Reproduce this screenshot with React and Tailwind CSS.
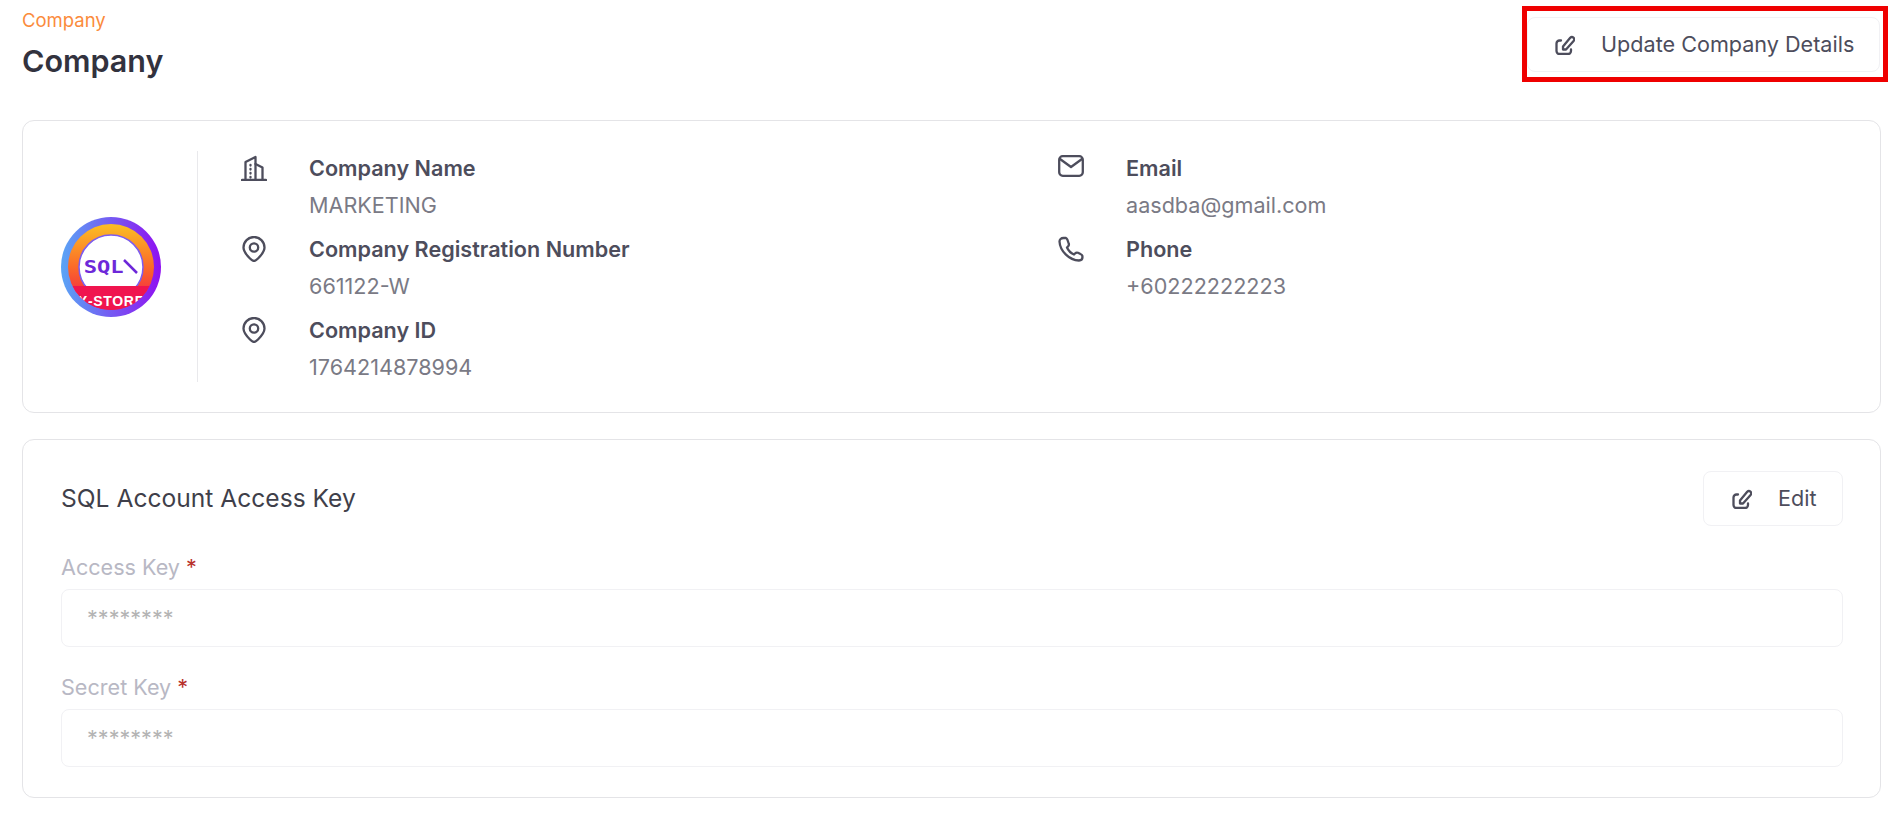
const FONT = "font-['Inter','Liberation_Sans',sans-serif]";

function EditIcon({ className }) {
  return (
    <svg viewBox="0 0 20 20" fill="none" stroke="currentColor" strokeWidth="2.300" strokeLinecap="round" strokeLinejoin="round" className={className}>
      <path d="M6 5.500H4.500a3 3 0 0 0-3 3V16a3 3 0 0 0 3 3H13a3 3 0 0 0 3-3v-1.500" />
      <path d="M8 14.500v-3L15.200 2.800a2.300 2.300 0 0 1 3.400 3.100L11 14.500z" />
    </svg>
  );
}
function Building() {
  return (
    <svg viewBox="0 0 26 26" fill="none" stroke="currentColor" strokeWidth="2.300" strokeLinecap="round" strokeLinejoin="round" className="w-[26px] h-[26px] text-[#4d4d5c]">
      <path d="M1 25h24" />
      <path d="M4.500 25V7l10-5v23" />
      <path d="M14.500 9l7 3.500V25" />
      <path d="M9.500 10v.5M9.500 14v.5M9.500 18v.5M9.500 22v.5" />
    </svg>
  );
}
function Pin() {
  return (
    <svg viewBox="0 0 26 26" fill="none" stroke="currentColor" strokeWidth="2.300" strokeLinecap="round" strokeLinejoin="round" className="w-[26px] h-[26px] text-[#4d4d5c]">
      <path d="M13 25c-1.500 0-2.500-1-4-2.500C6 19.500 2.500 16 2.500 11.500a10.500 10.500 0 0 1 21 0c0 4.500-3.500 8-6.500 11-1.500 1.500-2.500 2.500-4 2.500z" />
      <circle cx="13" cy="11.500" r="4.200" />
    </svg>
  );
}
function Mail() {
  return (
    <svg viewBox="0 0 26 22" fill="none" stroke="currentColor" strokeWidth="2.300" strokeLinecap="round" strokeLinejoin="round" className="w-[26px] h-[22px] text-[#4d4d5c]">
      <rect x="1.200" y="1.200" width="23.600" height="19.600" rx="3.500" />
      <path d="M2 4l11 8 11-8" />
    </svg>
  );
}
function Phone() {
  return (
    <svg viewBox="0 0 26 26" fill="none" stroke="currentColor" strokeWidth="2.300" strokeLinecap="round" strokeLinejoin="round" className="w-[26px] h-[26px] text-[#4d4d5c]">
      <path d="M8 2H5.500C3 2 1.500 3.500 1.500 5.500 2 15 11 24 21 24.500c2 0 3.500-1.500 3.500-3.500 0-1.500-.5-2.500-2-3l-2.500-1.200c-1.200-.5-2-.3-3 .7l-1 1c-3.500-1.500-5.500-3.500-7-7l1-1c1-1 1.200-1.800.7-3L9.500 4C9 3 8.800 2.300 8 2z" />
    </svg>
  );
}
function Logo() {
  return (
    <svg viewBox="0 0 100 100" className="w-[100px] h-[100px] shrink-0">
      <defs>
        <linearGradient id="ring" x1="0" y1="0.5" x2="1" y2="0.5">
          <stop offset="0" stopColor="#5aa5f5" />
          <stop offset="1" stopColor="#9010f0" />
        </linearGradient>
        <linearGradient id="inner" x1="0.5" y1="0" x2="0.5" y2="1">
          <stop offset="0" stopColor="#fbbf24" />
          <stop offset="0.5" stopColor="#fb6a28" />
          <stop offset="1" stopColor="#f01050" />
        </linearGradient>
        <clipPath id="disc"><circle cx="50" cy="50" r="43" /></clipPath>
      </defs>
      <circle cx="50" cy="50" r="50" fill="url(#ring)" />
      <circle cx="50" cy="50" r="43" fill="url(#inner)" />
      <circle cx="50" cy="50" r="32" fill="#ffffff" stroke="#7c5cf0" strokeWidth="1.500" />
      <text x="22.700" y="56" fontFamily="'DejaVu Sans Mono', monospace" fontWeight="700" fontSize="17" fill="#6d28d9" textLength="40" lengthAdjust="spacingAndGlyphs">SQL</text>
      <path d="M63 43 L76 56" stroke="#6d28d9" strokeWidth="2.500" />
      <g clipPath="url(#disc)">
        <rect x="0" y="69" width="100" height="31" fill="#f0154f" />
        <text x="17" y="89" fontFamily="'Liberation Sans', sans-serif" fontWeight="700" fontSize="14" fill="#ffffff" textLength="66" lengthAdjust="spacing">X-STORE</text>
      </g>
    </svg>
  );
}
function Info({ icon, label, value }) {
  return (
    <div className="flex">
      <div className="w-[68px] shrink-0 pt-px">{icon}</div>
      <div>
        <div className="text-[21.6px] leading-[28px] font-semibold text-[#4d4d5c]">{label}</div>
        <div className="mt-[9px] text-[21.6px] leading-[28px] text-[#7a7a85]">{value}</div>
      </div>
    </div>
  );
}
function Field({ label }) {
  return (
    <div>
      <div className="text-[21.6px] leading-[28px] text-[#b8b8c4]">
        {label} <span className="text-[#b8322c]">*</span>
      </div>
      <div className="mt-[8px] h-[58px] rounded-lg border border-[#f1f1f4] bg-white px-[25px] flex items-center text-[21.6px] text-[#b4b4b4]">
        ********
      </div>
    </div>
  );
}
export default function App() {
  return (
    <div className={`${FONT} w-[1900px] h-[836px] bg-white overflow-hidden pl-[22px] pr-[19px]`}>
      <div className="flex justify-between h-[120px]">
        <div className="pt-[7px]">
          <div className="text-[18.500px] leading-[26px] text-[#fb8b3c]">Company</div>
          <h1 className="mt-[10px] text-[30.500px] leading-[36px] font-semibold text-[#32323e]">Company</h1>
        </div>
        <div className="mt-[6px] h-[76px] -mr-[7px] border-[5px] border-[#ef0000] flex items-start">
          <button className="mt-[6px] mr-[3px] h-[55px] w-[353px] rounded-lg border border-[#f1f1f4] bg-white flex items-center pl-[27px] text-[21.6px] text-[#4d4d5c]">
            <EditIcon className="w-[20px] h-[20px] mr-[26px] text-[#4d4d5c]" />
            Update Company Details
          </button>
        </div>
      </div>

      <section className="h-[293px] rounded-xl border border-[#e4e4e7] flex items-center pl-[38px] pr-[30px]">
        <Logo />
        <div className="ml-[36px] h-[231px] border-l border-[#e9e9ec] pl-[43px] pt-[2.500px] grid grid-cols-[817px_1fr] flex-1 content-start">
          <div className="flex flex-col gap-[16px]">
            <Info icon={<Building />} label="Company Name" value="MARKETING" />
            <Info icon={<Pin />} label="Company Registration Number" value="661122-W" />
            <Info icon={<Pin />} label="Company ID" value="1764214878994" />
          </div>
          <div className="flex flex-col gap-[16px]">
            <Info icon={<Mail />} label="Email" value="aasdba@gmail.com" />
            <Info icon={<Phone />} label="Phone" value="+60222222223" />
          </div>
        </div>
      </section>

      <section className="mt-[26px] h-[359px] rounded-xl border border-[#e4e4e7] pl-[38px] pr-[37px] pt-[31px]">
        <div className="flex items-center justify-between">
          <h2 className="-mt-[2px] text-[24.600px] leading-[32px] text-[#3f3f4a]">SQL Account Access Key</h2>
          <button className="h-[55px] w-[140px] rounded-lg border border-[#f1f1f4] bg-white flex items-center pl-[28px] text-[21.6px] text-[#4d4d5c]">
            <EditIcon className="w-[20px] h-[20px] mr-[26px] text-[#4d4d5c]" />
            Edit
          </button>
        </div>
        <div className="mt-[27px] flex flex-col gap-[26px]">
          <Field label="Access Key" />
          <Field label="Secret Key" />
        </div>
      </section>
    </div>
  );
}
